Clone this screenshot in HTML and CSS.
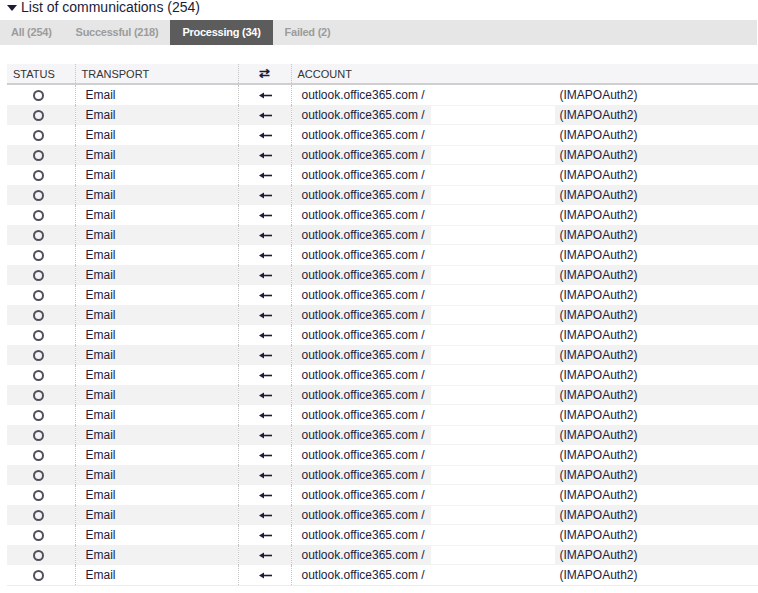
FILE: index.html
```html
<!DOCTYPE html>
<html>
<head>
<meta charset="utf-8">
<link rel="stylesheet" href="styles.css">
</head>
<body>
<div class="title"><span class="caret"></span>List of communications (254)</div>
<div class="tabs">
  <div class="tab">All (254)</div>
  <div class="tab">Successful (218)</div>
  <div class="tab active">Processing (34)</div>
  <div class="tab">Failed (2)</div>
</div>
<table class="grid">
  <colgroup>
    <col class="c-status"><col class="c-transport"><col class="c-dir"><col class="c-account">
  </colgroup>
  <thead>
    <tr><th>STATUS</th><th>TRANSPORT</th><th class="dir">&#8644;</th><th>ACCOUNT</th></tr>
  </thead>
  <tbody id="rows"></tbody>
</table>
<script src="app.js"></script>
</body>
</html>
```
FILE: app.js
```js
var tb = document.getElementById('rows');
var html = '';
var arrow = '<svg class="arr" width="13" height="7" viewBox="0 0 13 7"><path d="M4 3.5H13" stroke="#1c1c3a" stroke-width="1.6"/><path d="M0 3.5L5 0.5V6.5Z" fill="#1c1c3a"/></svg>';
for (var i = 0; i < 25; i++) {
  html += '<tr><td class="st"><span class="ring"></span></td>' +
    '<td class="tr">Email</td>' +
    '<td class="dir">' + arrow + '</td>' +
    '<td class="acc"><div class="accwrap"><span class="host">outlook.office365.com /<span class="mask"></span></span><span class="proto">(IMAPOAuth2)</span></div></td></tr>';
}
tb.innerHTML = html;
```
FILE: styles.css
```css
html, body { margin: 0; padding: 0; background: #fff; }
body {
  font-family: "Liberation Sans", Arial, sans-serif;
  color: #1c1c3a;
  width: 758px;
}
.title {
  display: flex;
  align-items: center;
  height: 15px;
  font-size: 14px;
  line-height: 15px;
  padding-left: 7px;
}
.caret {
  width: 0; height: 0;
  border-left: 5px solid transparent;
  border-right: 5px solid transparent;
  border-top: 6px solid #1c1c3a;
  margin-right: 4px;
}
.tabs {
  display: flex;
  margin-top: 5px;
  height: 25px;
  background: #e6e6e6;
  width: 757px;
}
.tab {
  padding: 0 12px;
  font-size: 11px;
  font-weight: bold;
  letter-spacing: -0.25px;
  line-height: 25px;
  color: #9c9c9c;
}
.tab:first-child { padding-left: 11px; }
.tab.active { background: #5c5c5c; color: #fff; }
.grid {
  margin: 19px 0 0 7px;
  width: 751px;
  border-collapse: collapse;
  table-layout: fixed;
  font-size: 12px;
}
.c-status { width: 68px; }
.c-transport { width: 163px; }
.c-dir { width: 53px; }
.grid th {
  background: #f5f5f7;
  height: 19px;
  padding: 0 6px;
  text-align: left;
  font-weight: normal;
  font-size: 11px;
  color: #333;
  border-bottom: 2px solid #cfcfcf;
  border-left: 1px dotted #c4c4c4;
  vertical-align: middle;
}
.grid th:first-child { border-left: none; }
.grid th.dir { text-align: center; font-size: 13px; padding: 0; font-weight: bold; color: #1c1c3a; }
.grid td {
  height: 20px;
  padding: 0 0 0 10px;
  border-left: 1px dotted #c4c4c4;
  vertical-align: middle;
  white-space: nowrap;
  overflow: hidden;
}
.grid td:first-child { border-left: none; }
.grid tbody tr:nth-child(even) td { background: #f2f2f2; }
.grid tbody tr:last-child td { border-bottom: 1px solid #ececec; }
.grid td.st { text-align: center; padding: 0 5px 0 0; }
.ring {
  display: inline-block;
  width: 7px; height: 7px;
  border: 2px solid #50505e;
  border-radius: 50%;
  vertical-align: middle;
}
.grid td.dir { text-align: center; padding: 0 0 0 1px; }
.arr { display: inline-block; vertical-align: middle; }
.accwrap { display: flex; align-items: center; }
.host { display: inline-flex; align-items: center; width: 258px; }
.mask { display: inline-block; width: 124px; height: 18px; background: #fff; margin-left: 6px; }
.proto { display: inline-block; }
```
